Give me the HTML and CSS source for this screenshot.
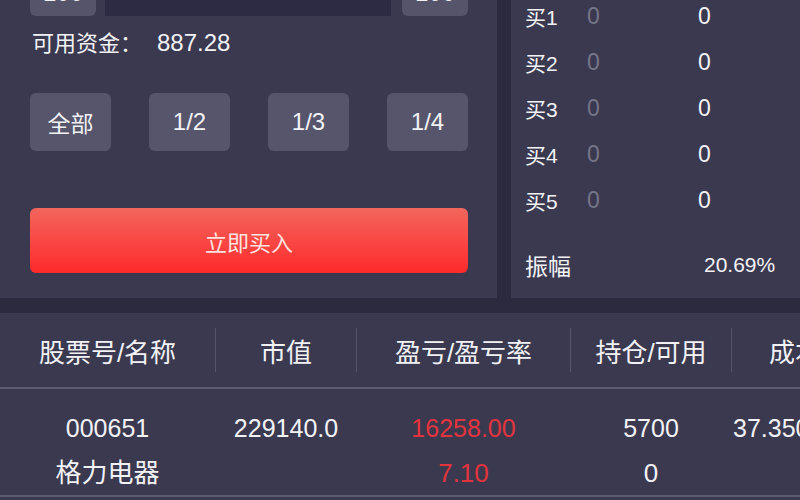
FILE: index.html
```html
<!DOCTYPE html>
<html lang="zh-CN">
<head>
<meta charset="utf-8">
<link rel="stylesheet" href="styles.css">
</head>
<body>
<div class="page">
  <div class="top">
    <section class="trade">
      <div class="stepper">
        <div class="step-btn">100</div>
        <div class="step-input"></div>
        <div class="step-btn">100</div>
      </div>
      <div class="funds"><span class="funds-label">可用资金：</span><span class="funds-value">887.28</span></div>
      <div class="quick">
        <div class="qbtn">全部</div>
        <div class="qbtn num">1/2</div>
        <div class="qbtn num">1/3</div>
        <div class="qbtn num">1/4</div>
      </div>
      <div class="buy">立即买入</div>
    </section>
    <section class="book">
      <div class="book-row"><span class="lbl">买1</span><span class="price">0</span><span class="vol">0</span></div>
      <div class="book-row"><span class="lbl">买2</span><span class="price">0</span><span class="vol">0</span></div>
      <div class="book-row"><span class="lbl">买3</span><span class="price">0</span><span class="vol">0</span></div>
      <div class="book-row"><span class="lbl">买4</span><span class="price">0</span><span class="vol">0</span></div>
      <div class="book-row"><span class="lbl">买5</span><span class="price">0</span><span class="vol">0</span></div>
      <div class="amp-row"><span class="amp-lbl">振幅</span><span class="amp-val">20.69%</span></div>
    </section>
  </div>
  <section class="holdings">
    <div class="thead">
      <div class="th c1">股票号/名称</div>
      <div class="sep"></div>
      <div class="th c2">市值</div>
      <div class="sep"></div>
      <div class="th c3">盈亏/盈亏率</div>
      <div class="sep"></div>
      <div class="th c4">持仓/可用</div>
      <div class="sep"></div>
      <div class="th c5 h5">成本</div>
    </div>
    <div class="trow">
      <div class="td c1"><div>000651</div><div>格力电器</div></div>
      <div class="gap"></div>
      <div class="td c2"><div>229140.0</div><div>&nbsp;</div></div>
      <div class="gap"></div>
      <div class="td c3 red"><div>16258.00</div><div>7.10</div></div>
      <div class="gap"></div>
      <div class="td c4"><div>5700</div><div>0</div></div>
      <div class="gap"></div>
      <div class="td c5 d5"><div>37.350</div><div>&nbsp;</div></div>
    </div>
  </section>
</div>
</body>
</html>
```
FILE: styles.css
```css
html, body {
  margin: 0;
  padding: 0;
}
body {
  background: #2b2a3f;
  font-family: "Liberation Sans", "Noto Sans CJK SC", sans-serif;
  color: #f2f2f6;
  width: 800px;
  height: 500px;
  overflow: hidden;
}
.page {
  width: 800px;
  height: 500px;
  overflow: hidden;
}
.top {
  display: flex;
  gap: 14px;
  height: 298px;
}
.trade {
  width: 497px;
  flex: none;
  background: #3a394f;
  padding: 0 29px 0 30px;
  box-sizing: border-box;
}
.stepper {
  display: flex;
  height: 46px;
  margin-top: -30px;
}
.step-btn {
  width: 66px;
  background: #55546a;
  border-radius: 6px;
  display: flex;
  align-items: center;
  justify-content: center;
  font-size: 24px;
}
.step-input {
  width: 286px;
  margin: 0 11px 0 9px;
  background: #2d2b44;
}
.funds {
  margin-top: 12px;
  height: 30px;
  line-height: 30px;
  font-size: 22px;
  padding-left: 2px;
}
.funds-label {
  display: inline-block;
  width: 125px;
}
.funds-value {
  font-size: 24px;
}
.quick {
  display: flex;
  justify-content: space-between;
  margin-top: 35px;
}
.qbtn {
  width: 81px;
  height: 58px;
  background: #56556b;
  border-radius: 6px;
  display: flex;
  align-items: center;
  justify-content: center;
  font-size: 23px;
}
.qbtn.num {
  font-size: 24px;
}
.buy {
  margin-top: 57px;
  height: 65px;
  border-radius: 6px;
  background: linear-gradient(#f2665c, #ff2a2c);
  display: flex;
  align-items: center;
  justify-content: center;
  font-size: 22px;
  color: #fde3e0;
}
.book {
  flex: 1;
  background: #3a394f;
  padding-left: 14px;
  box-sizing: border-box;
  overflow: hidden;
}
.book-row {
  display: grid;
  grid-template-columns: 62px 111px auto;
  height: 46px;
  align-items: center;
  font-size: 23px;
}
.book-row:first-child {
  margin-top: -7px;
}
.lbl {
  font-size: 21px;
}
.price {
  color: #76758a;
}
.amp-row {
  display: grid;
  grid-template-columns: 179px auto;
  height: 46px;
  align-items: center;
  margin-top: 19px;
}
.amp-lbl {
  font-size: 23px;
}
.amp-val {
  font-size: 21px;
}
.holdings {
  margin-top: 15px;
  height: 187px;
  background: #3a394f;
  width: 900px;
}
.thead {
  display: flex;
  align-items: center;
  height: 74px;
  border-bottom: 2px solid #5d5c75;
}
.th {
  font-size: 26px;
  text-align: center;
}
.sep {
  width: 1px;
  height: 44px;
  background: #56556c;
  flex: none;
}
.gap {
  width: 1px;
  flex: none;
}
.c1 { width: 215px; flex: none; }
.c2 { width: 140px; flex: none; }
.c3 { width: 213px; flex: none; }
.c4 { width: 160px; flex: none; }
.c5 { width: 160px; flex: none; }
.h5 { text-align: left; padding-left: 37px; }
.trow {
  display: flex;
  height: 108px;
  box-sizing: border-box;
  padding-top: 17px;
  border-bottom: 2px solid #5d5c75;
}
.td {
  font-size: 25px;
  line-height: 45px;
  text-align: center;
}
.td div:last-child {
  font-size: 26px;
}
.d5 { text-align: left; padding-left: 1px; }
.red { color: #e3343d; }
```
